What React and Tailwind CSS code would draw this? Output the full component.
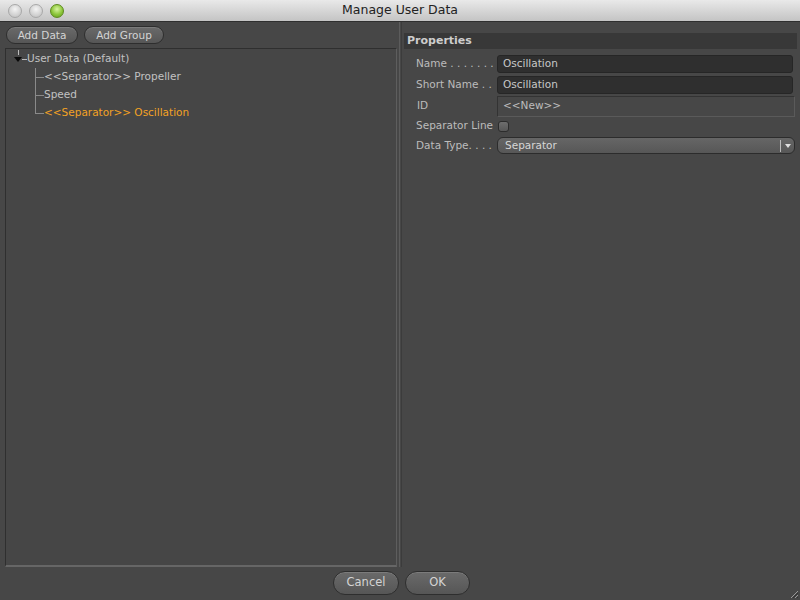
import React from "react";

const font = { fontFamily: '"DejaVu Sans", "Liberation Sans", sans-serif' };

const TrafficLight = ({ active }) => (
  <div
    className={`w-[14px] h-[14px] rounded-full border ${
      active
        ? "border-[#5e8a1e] bg-[radial-gradient(circle_at_50%_35%,#d8f5a0,#8cc63a_55%,#5f9a1c)]"
        : "border-[#a8a8a8] bg-[radial-gradient(circle_at_50%_35%,#f4f4f4,#d2d2d2_60%,#bcbcbc)]"
    }`}
  />
);

const PillButton = ({ children, className = "" }) => (
  <button
    className={`flex items-center justify-center rounded-full border border-[#2e2e2e] bg-gradient-to-b from-[#6a6a6a] to-[#565656] text-[#d4d4d4] leading-none shadow-[inset_0_1px_0_rgba(255,255,255,0.12)] ${className}`}
  >
    {children}
  </button>
);

const Row = ({ label, children, h = "h-[21px]" }) => (
  <div className={`flex items-center ${h}`}>
    <div className="w-[93px] pl-[12px] text-[10.5px] text-[#bcbcbc] whitespace-nowrap">{label}</div>
    {children}
  </div>
);

export default function App() {
  return (
    <div className="w-[800px] h-[600px] flex flex-col bg-[#474747] overflow-hidden" style={font}>
      {/* title bar */}
      <div className="relative h-[22px] shrink-0 bg-gradient-to-b from-[#e9e9e9] to-[#c4c4c4] border-b border-[#2f2f2f] flex items-center justify-center">
        <div className="absolute left-[8px] top-[4px] flex gap-[7px]">
          <TrafficLight />
          <TrafficLight />
          <TrafficLight active />
        </div>
        <span className="text-[12.5px] text-[#222]">Manage User Data</span>
      </div>

      <div className="flex flex-1 min-h-0">
        {/* left side */}
        <div className="w-[399px] flex flex-col pl-[5px] pt-[4px]">
          <div className="flex gap-[6px] pl-[1px] h-[18px]">
            <PillButton className="w-[72px] text-[10.5px]">Add Data</PillButton>
            <PillButton className="w-[80px] text-[10.5px]">Add Group</PillButton>
          </div>
          <div className="mt-[4px] h-[519px] w-[392px] border-l border-t border-[#2f2f2f] border-b-2 border-b-[#666] border-r border-r-[#5e5e5e] bg-[#464646] relative">
            <div className="pl-[8px] pt-[1px] text-[10.5px] text-[#c2c2c2]">
              <div className="flex items-center h-[18px]">
                <div className="relative w-[13px] h-[18px]">
                  <div className="absolute left-[4px] top-[0px] w-px h-[5px] bg-[#bbb]" />
                  <div className="absolute left-[0px] top-[7px] w-0 h-0 border-l-[4.5px] border-r-[4.5px] border-t-[5px] border-l-transparent border-r-transparent border-t-[#0a0a0a]" />
                  <div className="absolute left-[8px] top-[9px] w-[5px] h-px bg-[#bbb]" />
                </div>
                <span>User Data (Default)</span>
              </div>
              <div className="relative pl-[21px]">
                <div className="absolute left-[21px] top-0 w-px h-[45px] bg-[#8a8a8a]" />
                {[
                  ["<<Separator>> Propeller", false],
                  ["Speed", false],
                  ["<<Separator>> Oscillation", true],
                ].map(([t, sel]) => (
                  <div key={t} className="flex items-center h-[18px]">
                    <div className="w-[9px] h-px bg-[#8a8a8a]" />
                    <span className={sel ? "text-[#f3a224]" : ""}>{t}</span>
                  </div>
                ))}
              </div>
            </div>
          </div>
        </div>

        {/* splitter */}
        <div className="w-[3px] border-l border-[#5c5c5c] border-r border-r-[#3c3c3c]" />

        {/* right side */}
        <div className="flex-1 pl-[2px] pr-[3px] pt-[11px]">
          <div className="h-[16px] bg-[#383838] flex items-center pl-[3px] text-[11px] font-bold text-[#cdcdcd]">
            Properties
          </div>
          <div className="pt-[4px] flex flex-col">
            <Row label="Name . . . . . . .">
              <div className="w-[296px] h-[18px] rounded-[3px] bg-[#2f2f2f] border border-[#262626] flex items-center pl-[5px] text-[10.5px] text-[#c8c8c8]">
                Oscillation
              </div>
            </Row>
            <Row label="Short Name . .">
              <div className="w-[296px] h-[18px] rounded-[3px] bg-[#2f2f2f] border border-[#262626] flex items-center pl-[5px] text-[10.5px] text-[#c8c8c8]">
                Oscillation
              </div>
            </Row>
            <Row label={<span className="pl-[1px]">ID</span>}>
              <div className="w-[298px] h-[21px] mt-[1px] border border-[#333] border-b-[#5a5a5a] border-r-[#5a5a5a] flex items-center pl-[5px] text-[10.5px] text-[#bdbdbd]">
                &lt;&lt;New&gt;&gt;
              </div>
            </Row>
            <Row label="Separator Line" h="h-[20px]">
              <div className="w-[11px] h-[11px] ml-[1px] rounded-[3px] bg-gradient-to-b from-[#6e6e6e] to-[#575757] border border-[#2c2c2c]" />
            </Row>
            <Row label="Data Type. . . ." h="h-[19px]">
              <div className="w-[298px] h-[17px] rounded-[6px] bg-gradient-to-b from-[#666] to-[#575757] border border-[#2c2c2c] flex items-center text-[10.5px] text-[#d6d6d6]">
                <span className="flex-1 pl-[7px]">Separator</span>
                <div className="w-px h-[12px] bg-[#bbb]" />
                <div className="w-[13px] flex justify-center">
                  <div className="w-0 h-0 border-l-[3.5px] border-r-[3.5px] border-t-[4px] border-l-transparent border-r-transparent border-t-[#e0e0e0]" />
                </div>
              </div>
            </Row>
          </div>
        </div>
      </div>

      {/* bottom buttons */}
      <div className="relative h-[33px] shrink-0 flex justify-center items-start pt-[4px] gap-[6px]">
        <PillButton className="w-[66px] h-[24px] rounded-[7px] text-[11.5px] ml-[3px]">Cancel</PillButton>
        <PillButton className="w-[65px] h-[24px] rounded-[7px] text-[11.5px]">OK</PillButton>
        <svg className="absolute right-[1px] bottom-[1px]" width="11" height="11" viewBox="0 0 11 11">
          <path d="M10 3 L3 10 M10 7 L7 10" stroke="#9a9a9a" strokeWidth="1" />
          <path d="M10 5 L5 10 M10 9 L9 10" stroke="#333" strokeWidth="1" />
        </svg>
      </div>
    </div>
  );
}
